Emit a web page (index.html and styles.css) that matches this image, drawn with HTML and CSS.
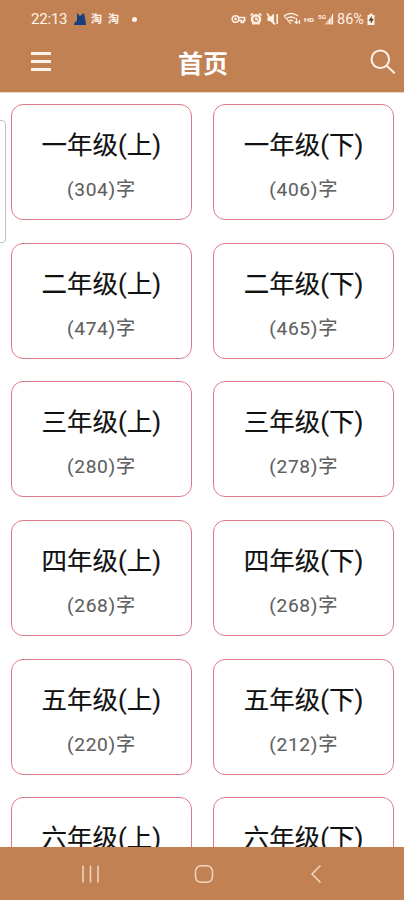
FILE: index.html
```
<!DOCTYPE html>
<html lang="zh-CN">
<head>
    <meta charset="UTF-8">
    <meta name="viewport" content="width=device-width, initial-scale=1.0">
    <title>首页</title>
    <link rel="stylesheet" href="styles.css">
</head>
<body>
    <div class="app">
        <header class="header">
            <div class="status-bar">
                <div class="status-left">
                    <span class="time">22:13</span>
                    <svg class="app-icon" width="12" height="12" viewBox="0 0 12 12"><path d="M3 0l3 3 4-3 1 5 1 7H0l1-3 2-1z" fill="#173f7d"/></svg>
                    <span class="tao">淘</span>
                    <span class="tao">淘</span>
                    <span class="dot"></span>
                </div>
                <div class="status-right">
                    <svg width="145" height="22" viewBox="0 -3 145 22" fill="none" stroke="#fff0e3" stroke-width="1.6">
                        <!-- key -->
                        <circle cx="4.5" cy="8" r="3.3"/>
                        <circle cx="4.5" cy="8" r=".6"/>
                        <path d="M7.5 6.5h6.2v3h-1.2v2h-2.2v-2H7.5"/>
                        <!-- alarm -->
                        <circle cx="25" cy="8.3" r="4" stroke-width="2.6"/>
                        <path d="M19.5 4.5L22 2.3M30.5 4.500L28 2.300M21.500 13.500l1.400-1.600M28.500 13.500l-1.400-1.600M25 6v2.600h2"/>
                        <!-- muted -->
                        <path d="M36.500 6h2.500l4-3.500v11L39 10h-2.500z" fill="#fff0e3" stroke="none"/>
                        <path d="M36 2.500l8 11M46.200 3v10"/>
                        <!-- wifi -->
                        <path d="M53 5q7-5 14 0M55.500 7.500q4.500-3 9 0M58 10q2-1.500 4 0" stroke-width="1.500"/>
                        <path d="M53 5l7 8M65.500 7v5.500M63.500 10.500l2 2 2-2M68.500 13V9" stroke-width="1.100"/>
                        <!-- signal -->
                        <path d="M93.500 13.500L101.500 4v9.500z" fill="#e9c9b0" stroke="none"/>
                        <path d="M101.500 3v10.500M98.500 8v5" stroke-width="1.200"/>
                        <!-- battery -->
                        <path d="M136.500 4h2V2.500h3V4h2v10h-7z" fill="#fff0e3" stroke="none"/>
                        <path d="M140.500 5.500L138 9.500h2V12l2.400-4h-2z" fill="#4f4036" stroke="#4f4036" stroke-width=".5"/>
                        <g class="status-text">
                            <text class="tiny" x="73" y="10.500" textLength="10" lengthAdjust="spacingAndGlyphs">HD</text>
                            <text class="tiny" x="87" y="7.500" textLength="8" lengthAdjust="spacingAndGlyphs">5G</text>
                            <text class="percent" x="106" y="13" textLength="27" lengthAdjust="spacingAndGlyphs">86%</text>
                        </g>
                    </svg>
                </div>
            </div>
            <div class="title-bar">
                <div class="menu"><span></span><span></span><span></span></div>
                <h1>首页</h1>
                <svg class="search" width="26" height="26" viewBox="0 0 26 26" fill="none" stroke="#fff1e7" stroke-width="2">
                    <circle cx="10.300" cy="10.300" r="8.800"/>
                    <path d="M16.500 16.500l8.200 7.800"/>
                </svg>
            </div>
        </header>

        <main class="grades">
            <div class="card"><h2>一年级(上)</h2><p>(304)字</p></div>
            <div class="card"><h2>一年级(下)</h2><p>(406)字</p></div>
            <div class="card"><h2>二年级(上)</h2><p>(474)字</p></div>
            <div class="card"><h2>二年级(下)</h2><p>(465)字</p></div>
            <div class="card"><h2>三年级(上)</h2><p>(280)字</p></div>
            <div class="card"><h2>三年级(下)</h2><p>(278)字</p></div>
            <div class="card"><h2>四年级(上)</h2><p>(268)字</p></div>
            <div class="card"><h2>四年级(下)</h2><p>(268)字</p></div>
            <div class="card"><h2>五年级(上)</h2><p>(220)字</p></div>
            <div class="card"><h2>五年级(下)</h2><p>(212)字</p></div>
            <div class="card"><h2>六年级(上)</h2></div>
            <div class="card"><h2>六年级(下)</h2></div>
        </main>

        <nav class="nav-bar">
            <svg width="20" height="20" viewBox="0 0 20 20"><path d="M2 1.500v17M9.500 1.500v17M17 1.500v17"/></svg>
            <svg width="20" height="20" viewBox="0 0 20 20"><rect x="1.500" y="1.800" width="17" height="16.500" rx="5.500"/></svg>
            <svg width="20" height="20" viewBox="0 0 20 20"><path d="M13.500 1.500L5 10l8.500 8.500"/></svg>
        </nav>

        <!-- edge panel handle -->
        <div class="edge-handle"></div>
    </div>
</body>
</html>
```
FILE: styles.css
```
* {
    box-sizing: border-box;
}
body {
    margin: 0;
    background: #fff;
    font-family: Roboto, "Noto Sans CJK SC", sans-serif;
}
.app {
    position: relative;
    display: flex;
    flex-direction: column;
    height: 900px;
    overflow: hidden;
}
.header {
    flex: none;
    height: 93px;
    background: #c18153;
    border-bottom: 1px solid #ead3c4;
    color: #fff4eb;
}
.status-bar {
    display: flex;
    justify-content: space-between;
    align-items: center;
    height: 38px;
    padding: 0 28px 0 31px;
}
.status-left {
    display: flex;
    align-items: center;
}
.time {
    width: 37px;
    font-size: 15px;
    letter-spacing: -0.2px;
}
.app-icon {
    margin: 0 5px 0 6px;
}
.tao {
    width: 12px;
    margin: 2px 5px 0 0;
    font-size: 11px;
    font-weight: bold;
    line-height: 14px;
}
.dot {
    width: 5px;
    height: 5px;
    margin-left: 7px;
    border-radius: 50%;
    background: #fff4eb;
}
.status-right svg {
    display: block;
}
.status-text {
    fill: #fff0e3;
    stroke: none;
}
.tiny {
    font-size: 6px;
    font-weight: bold;
}
.percent {
    font-size: 15px;
}
.title-bar {
    display: grid;
    grid-template-columns: 1fr auto 1fr;
    align-items: center;
    height: 47px;
    padding: 0 8px 0 31px;
}
.menu {
    display: grid;
    gap: 5px;
    width: 20px;
}
.menu span {
    height: 3px;
    background: #fff4eb;
}
.title-bar h1 {
    margin: 6px 0 0 -21px;
    font-size: 25px;
    font-weight: bold;
    line-height: 36px;
    color: #fff;
}
.search {
    justify-self: end;
}
.grades {
    flex: 1;
    min-height: 0;
    display: grid;
    grid-template-columns: 1fr 1fr;
    grid-auto-rows: 116px;
    gap: 22.7px 21.5px;
    padding: 11px 10px 0 11px;
    overflow: hidden;
}
.card {
    border: 1px solid #e0788c;
    border-radius: 12px;
    padding-top: 21px;
    text-align: center;
}
.card h2 {
    margin: 0;
    font-size: 25.5px;
    font-weight: 400;
    line-height: 38px;
    color: #111;
    -webkit-text-stroke: 0.15px #111;
}
.card p {
    margin: 11px 0 0;
    font-size: 19.2px;
    line-height: 30px;
    letter-spacing: 0.7px;
    color: #606060;
    -webkit-text-stroke: 0.1px #606060;
}
.nav-bar {
    flex: none;
    display: flex;
    justify-content: space-between;
    align-items: center;
    height: 53px;
    padding: 1px 77px 0 81px;
    background: #c18153;
}
.nav-bar svg {
    fill: none;
    stroke: #f0d8c7;
    stroke-width: 1.5;
}
.edge-handle {
    position: absolute;
    left: -6px;
    top: 120px;
    width: 12px;
    height: 123px;
    border: 1px solid #c4c4c8;
    border-radius: 4px;
    background: #fff;
}
```
